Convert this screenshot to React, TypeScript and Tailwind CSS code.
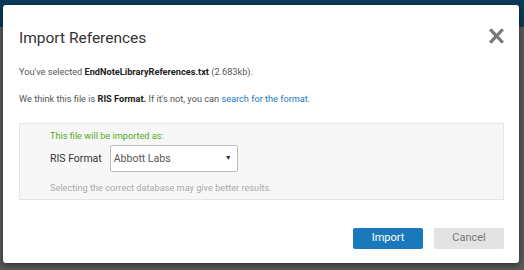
import React from 'react';

const App: React.FC = () => {
  return (
    <div className="relative w-[524px] h-[270px] overflow-hidden bg-[#5a5a5a]" style={{ fontFamily: 'Roboto, "Liberation Sans", sans-serif' }}>
      <div className="h-[27px] bg-[#0c3a5c]" />

      {/* modal */}
      <div className="absolute left-[3px] top-[5px] w-[516px] h-[258px] bg-white rounded-[3px] shadow-[0_2px_6px_rgba(0,0,0,0.5)] flex flex-col pl-[16px] pr-[15px]">
        <div className="flex items-start justify-between pt-[23px]">
          <h2 className="text-[15.5px] leading-[20px] text-[#333]">Import References</h2>
          <button className="text-[#777]">
            <svg width="15" height="16" viewBox="0 0 15 16">
              <path d="M2.3 2.5 L12.7 13.5 M12.7 2.5 L2.3 13.5" stroke="currentColor" strokeWidth="3.2" strokeLinecap="square" />
            </svg>
          </button>
        </div>

        <p className="mt-[18px] text-[9.2px] leading-[12px] text-[#555]">
          You've selected <span className="font-bold text-[#222]">EndNoteLibraryReferences.txt</span> (2.683kb).
        </p>
        <p className="mt-[15px] text-[9.2px] leading-[12px] text-[#555]">
          We think this file is <span className="font-bold text-[#222]">RIS Format.</span> If it's not, you can{' '}
          <a className="text-[#2479c1]">search for the format.</a>
        </p>

        <div className="mt-[18px] h-[77px] bg-[#f7f7f7] border border-[#e6e6e6] pl-[30px] pt-[6px]">
          <p className="text-[9.2px] leading-[12px] text-[#4fae22]">This file will be imported as:</p>
          <div className="flex items-center gap-[8px] mt-[3px]">
            <span className="text-[10.5px] text-[#333]">RIS Format</span>
            <div className="w-[128px] h-[27px] bg-white border border-[#bdbdbd] rounded-[2px] flex items-center justify-between pl-[3px] pr-[5px]">
              <span className="text-[10.5px] text-[#555]">Abbott Labs</span>
              <span className="text-[7px] text-[#333]">▼</span>
            </div>
          </div>
          <p className="mt-[10px] text-[9.2px] leading-[12px] text-[#aaa]">Selecting the correct database may give better results.</p>
        </div>

        <div className="mt-auto mb-[14px] flex justify-end gap-[11px]">
          <button className="w-[70px] h-[21px] bg-[#1a78bd] text-white text-[11px] rounded-[2px]">Import</button>
          <button className="w-[70px] h-[21px] bg-[#e3e3e3] text-[#777] text-[11px] rounded-[2px]">Cancel</button>
        </div>
      </div>
    </div>
  );
};

export default App;
